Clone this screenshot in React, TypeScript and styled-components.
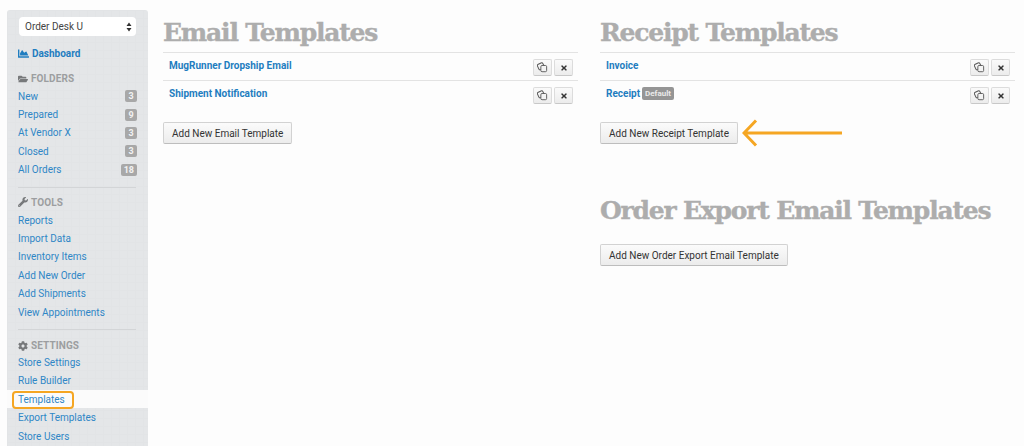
import styled, { createGlobalStyle } from "styled-components";
import { FaChartArea, FaCog, FaFolderOpen, FaTimes, FaWrench } from "react-icons/fa";

const GlobalStyle = createGlobalStyle`
  html, body {
    margin: 0;
    height: 446px;
    overflow: hidden;
    background: #fdfdfd;
    font-family: "Roboto", "Liberation Sans", sans-serif;
  }
`;

const Page = styled.div`
  display: flex;
  height: 446px;
  overflow: hidden;
`;

const Sidebar = styled.aside`
  flex: none;
  width: 141px;
  height: 436px;
  margin: 10px 0 0 7px;
  padding-top: 7px;
  box-sizing: border-box;
  background-color: #e4e6e8;
  background-image: linear-gradient(#e2e4e6 1px, transparent 1px),
    linear-gradient(90deg, #e2e4e6 1px, transparent 1px);
  background-size: 8px 8px;
  border-radius: 3px 3px 0 0;
  overflow: hidden;
`;

const SelectBox = styled.div`
  display: flex;
  align-items: center;
  justify-content: space-between;
  width: 117px;
  height: 19px;
  margin: 0 0 0 12px;
  padding: 0 4px 0 6px;
  box-sizing: border-box;
  background: #fff;
  border-radius: 4px;
  font-size: 10px;
  color: #444;
`;

const DashLink = styled.a`
  display: flex;
  align-items: center;
  gap: 3px;
  margin: 11px 0 0 11px;
  height: 13px;
  font-size: 10px;
  font-weight: 700;
  color: #1f7dc0;
  svg {
    font-size: 11px;
  }
`;

const SectionTitle = styled.div<{ $top: number }>`
  display: flex;
  align-items: center;
  gap: 3px;
  margin: ${(p) => p.$top}px 0 0 11px;
  height: 13px;
  font-size: 10px;
  font-weight: 700;
  letter-spacing: 0.1px;
  color: #9c9ea0;
  svg {
    font-size: 10px;
    color: #77797b;
  }
`;

const NavRow = styled.a<{ $active?: boolean }>`
  display: flex;
  align-items: center;
  justify-content: space-between;
  height: 18.4px;
  padding: 0 11px;
  font-size: 10px;
  color: #2f86c6;
  background: ${(p) => (p.$active ? "#fbfbfb" : "transparent")};
`;

const TitleGap = styled.div<{ $size: number }>`
  height: ${(p) => p.$size}px;
`;

const Count = styled.span`
  min-width: 6px;
  height: 12px;
  padding: 0 3px;
  border-radius: 2px;
  background: #a8a8a8;
  color: #f2f2f2;
  font-size: 9px;
  font-weight: 700;
  line-height: 12px;
  text-align: center;
`;

const Divider = styled.hr`
  width: 118px;
  height: 1px;
  margin: 8px 0 0 11px;
  border: 0;
  background: #d3d5d7;
`;

const Highlighted = styled.span`
  position: relative;
  &::before {
    content: "";
    position: absolute;
    inset: -3px -9px -4px -6px;
    border: 2.5px solid #f5a623;
    border-radius: 4px;
  }
`;

const Content = styled.main`
  display: grid;
  grid-template-columns: 415px 415px;
  column-gap: 22px;
  align-items: start;
  margin: 0 0 0 15px;
  padding-top: 16px;
`;

const Column = styled.section`
  display: flex;
  flex-direction: column;
`;

const Heading = styled.h2<{ $top?: number }>`
  margin: ${(p) => p.$top ?? 0}px 0 0;
  height: 36px;
  font-family: "DejaVu Serif", "Liberation Serif", serif;
  font-size: 25px;
  font-weight: 700;
  line-height: 34px;
  letter-spacing: -1.2px;
  -webkit-text-stroke: 0.4px #adadad;
  color: #adadad;
  white-space: nowrap;
`;

const TemplateRow = styled.div`
  display: flex;
  align-items: flex-start;
  justify-content: space-between;
  height: 28px;
  box-sizing: border-box;
  padding: 6px 0 0 6px;
  border-top: 1px solid #e3e3e3;
`;

const TemplateLink = styled.a`
  display: flex;
  align-items: center;
  gap: 2px;
  height: 13px;
  font-size: 10px;
  font-weight: 700;
  color: #1f7dc0;
`;

const DefaultBadge = styled.span`
  padding: 0 3px;
  height: 13px;
  border-radius: 2px;
  background: #959595;
  color: #e9e9e9;
  font-size: 8px;
  font-weight: 700;
  line-height: 13px;
`;

const RowActions = styled.div`
  display: flex;
  gap: 2px;
  margin-right: 5px;
`;

const IconButton = styled.button`
  display: flex;
  align-items: center;
  justify-content: center;
  width: 19px;
  height: 17px;
  padding: 0;
  border: 1px solid #dcdcdc;
  border-bottom-color: #c8c8c8;
  border-radius: 2px;
  background: linear-gradient(#fafafa, #ececec);
  color: #333;
  font-size: 8px;
`;

const ButtonRow = styled.div<{ $top: number }>`
  display: flex;
  align-items: center;
  margin-top: ${(p) => p.$top}px;
`;

const AddButton = styled.button`
  height: 22px;
  padding: 0 8px;
  border: 1px solid #d2d2d2;
  border-bottom-color: #bdbdbd;
  border-radius: 2px;
  background: linear-gradient(#fbfbfb, #ececec);
  font-family: "Roboto", "Liberation Sans", sans-serif;
  font-size: 10px;
  color: #333;
  white-space: nowrap;
`;

const Arrow = styled.svg`
  flex: none;
  margin: -3px 0 -3px 4px;
`;

const CopyIcon = () => (
  <svg width="11" height="11" viewBox="0 0 12 12" fill="none" stroke="#555" strokeWidth="1">
    <rect x="1" y="1.5" width="6.5" height="6.5" rx="1.6" transform="rotate(-25 4.2 4.7)" />
    <rect x="4.2" y="3.8" width="6.3" height="6.8" rx="1.3" fill="#f3f3f3" />
  </svg>
);

const SelectArrows = () => (
  <svg width="6" height="10" viewBox="0 0 6 10" fill="#333">
    <path d="M3 0.5 5.5 4H.5zM3 9.5.5 6h5z" />
  </svg>
);

const folders = [
  { label: "New", count: 3 },
  { label: "Prepared", count: 9 },
  { label: "At Vendor X", count: 3 },
  { label: "Closed", count: 3 },
  { label: "All Orders", count: 18 },
];
const tools = ["Reports", "Import Data", "Inventory Items", "Add New Order", "Add Shipments", "View Appointments"];

const Actions = () => (
  <RowActions>
    <IconButton>
      <CopyIcon />
    </IconButton>
    <IconButton>
      <FaTimes />
    </IconButton>
  </RowActions>
);

export default function App() {
  return (
    <>
      <GlobalStyle />
      <Page>
        <Sidebar>
          <SelectBox>
            Order Desk U
            <SelectArrows />
          </SelectBox>
          <DashLink>
            <FaChartArea />
            Dashboard
          </DashLink>
          <SectionTitle $top={12}>
            <FaFolderOpen />
            FOLDERS
          </SectionTitle>
          <TitleGap $size={2} />
          {folders.map((f) => (
            <NavRow key={f.label}>
              {f.label}
              <Count>{f.count}</Count>
            </NavRow>
          ))}
          <Divider />
          <SectionTitle $top={8}>
            <FaWrench />
            TOOLS
          </SectionTitle>
          <TitleGap $size={2} />
          {tools.map((t) => (
            <NavRow key={t}>{t}</NavRow>
          ))}
          <Divider />
          <SectionTitle $top={9}>
            <FaCog />
            SETTINGS
          </SectionTitle>
          <TitleGap $size={1} />
          <NavRow>Store Settings</NavRow>
          <NavRow>Rule Builder</NavRow>
          <NavRow $active>
            <Highlighted>Templates</Highlighted>
          </NavRow>
          <NavRow>Export Templates</NavRow>
          <NavRow>Store Users</NavRow>
        </Sidebar>
        <Content>
          <Column>
            <Heading>Email Templates</Heading>
            <TemplateRow>
              <TemplateLink>MugRunner Dropship Email</TemplateLink>
              <Actions />
            </TemplateRow>
            <TemplateRow>
              <TemplateLink>Shipment Notification</TemplateLink>
              <Actions />
            </TemplateRow>
            <ButtonRow $top={14}>
              <AddButton>Add New Email Template</AddButton>
            </ButtonRow>
          </Column>
          <Column>
            <Heading>Receipt Templates</Heading>
            <TemplateRow>
              <TemplateLink>Invoice</TemplateLink>
              <Actions />
            </TemplateRow>
            <TemplateRow>
              <TemplateLink>
                Receipt <DefaultBadge>Default</DefaultBadge>
              </TemplateLink>
              <Actions />
            </TemplateRow>
            <ButtonRow $top={14}>
              <AddButton>Add New Receipt Template</AddButton>
              <Arrow width="100" height="28" viewBox="0 0 100 28" fill="none" stroke="#f5a623" strokeWidth="3">
                <path d="M2 14H100M14 1.5 2 14l12 12.5" />
              </Arrow>
            </ButtonRow>
            <Heading $top={50}>Order Export Email Templates</Heading>
            <ButtonRow $top={14}>
              <AddButton>Add New Order Export Email Template</AddButton>
            </ButtonRow>
          </Column>
        </Content>
      </Page>
    </>
  );
}
